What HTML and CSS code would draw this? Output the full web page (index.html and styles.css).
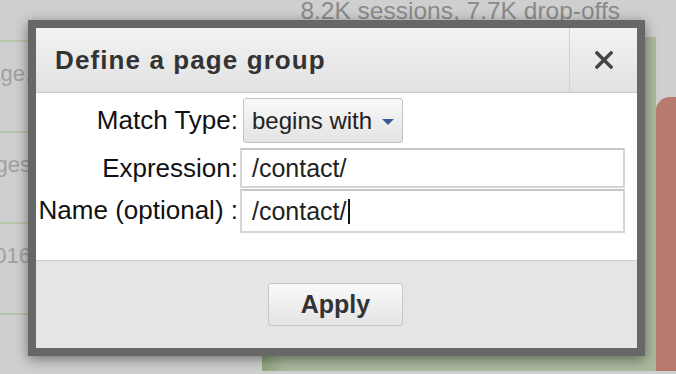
FILE: index.html
```html
<!DOCTYPE html>
<html lang="en">
<head>
  <meta charset="UTF-8">
  <title>Define a page group</title>
  <link rel="stylesheet" href="styles.css">
</head>
<body>
  <div class="page">
    <div class="summary">8.2K sessions, 7.7K drop-offs</div>
    <div class="stage">
      <div class="steps">
        <div class="step"><span>Page.</span></div>
        <div class="step"><span>Pages</span></div>
        <div class="step"><span>2016</span></div>
        <div class="step"></div>
      </div>
      <div class="funnel"></div>
      <div class="exits"></div>
    </div>
  </div>

  <div class="dialog">
    <div class="dialog-head">
      <div class="dialog-title">Define a page group</div>
      <div class="dialog-close">
        <svg width="18" height="18" viewBox="0 0 18 18">
          <path d="M2 2 L16 16 M16 2 L2 16" stroke="#444" stroke-width="3.4" stroke-linecap="square"/>
        </svg>
      </div>
    </div>
    <div class="dialog-body">
      <label class="label">Match Type:</label>
      <div>
        <div class="select">begins with <span class="arrow"></span></div>
      </div>
      <label class="label">Expression:</label>
      <div class="field">/contact/</div>
      <label class="label">Name (optional) :</label>
      <div class="field">/contact/<span class="caret"></span></div>
    </div>
    <div class="dialog-foot">
      <button class="apply">Apply</button>
    </div>
  </div>
</body>
</html>
```

FILE: styles.css
```css
body {
  margin: 0;
  font-family: "Liberation Sans", Arial, sans-serif;
  color: #222;
}

.page {
  position: relative;
  height: 374px;
  overflow: hidden;
  background: #cfcfcf;
}

.summary {
  height: 40px;
  margin-top: -3px;
  padding-right: 56px;
  text-align: right;
  font-size: 24.5px;
  color: #8a8a8a;
}

.stage {
  display: flex;
  height: 334px;
}

.steps {
  width: 262px;
  padding-top: 3px;
}

.step {
  display: flex;
  justify-content: flex-end;
  height: 89px;
  border-top: 2px solid #b7c6a6;
  padding-top: 19px;
  padding-right: 231px;
  font-size: 22px;
  color: #a0a0a0;
  white-space: nowrap;
  overflow: hidden;
  box-sizing: border-box;
  margin-bottom: 2px;
}

.funnel {
  flex: 1;
  background: linear-gradient(to right, #8ea67e, #abb99e 22px);
}

.exits {
  width: 20px;
  margin-top: 60px;
  background: #b87a6e;
  border-top-left-radius: 14px;
}

.dialog {
  position: absolute;
  left: 28px;
  top: 20px;
  width: 617px;
  height: 336px;
  box-sizing: border-box;
  border: 8px solid #676767;
  background: #fff;
  box-shadow: 0 3px 12px rgba(0, 0, 0, 0.45);
  display: flex;
  flex-direction: column;
}

.dialog-head {
  display: flex;
  height: 65px;
  box-sizing: border-box;
  border-bottom: 1px solid #c9c9c9;
  background: linear-gradient(#f3f3f3, #e1e1e1);
}

.dialog-title {
  flex: 1;
  display: flex;
  align-items: center;
  padding-left: 19px;
  font-weight: bold;
  font-size: 26px;
  letter-spacing: 1.1px;
  color: #333;
}

.dialog-close {
  width: 67px;
  display: flex;
  align-items: center;
  justify-content: center;
  border-left: 1px solid #d2d2d2;
}

.dialog-body {
  display: grid;
  grid-template-columns: 198px 1fr;
  grid-template-rows: 45px 45px 44px;
  column-gap: 2px;
  height: 167px;
  box-sizing: border-box;
  padding: 5px 12px 0 4px;
  font-size: 25px;
}

.label {
  display: flex;
  align-items: center;
  justify-content: flex-end;
  white-space: nowrap;
  font-size: 26px;
  color: #111;
}

.label:nth-of-type(2) {
  margin-top: 5px;
}

.select {
  display: inline-flex;
  align-items: center;
  gap: 10px;
  margin-left: 3px;
  height: 45px;
  width: 160px;
  box-sizing: border-box;
  padding-left: 8px;
  font-size: 24px;
  border: 1px solid #c2c2c2;
  border-radius: 3px;
  background: linear-gradient(#f9f9f9, #e3e3e3);
  color: #222;
}

.arrow {
  width: 0;
  height: 0;
  border-left: 6px solid transparent;
  border-right: 6px solid transparent;
  border-top: 6px solid #3d5a98;
  margin-top: 2px;
}

.field {
  display: flex;
  align-items: center;
  box-sizing: border-box;
  padding-left: 10px;
  border: 2px solid #d6d6d6;
  border-top-color: #c6c6c6;
  background: #fff;
  color: #222;
}

.field:nth-of-type(2) {
  margin-top: 5px;
}

.field:last-child {
  margin-top: 1px;
  height: 44px;
}

.caret {
  display: inline-block;
  width: 2px;
  height: 25px;
  margin-left: 1px;
  background: #111;
}

.dialog-foot {
  flex: 1;
  display: flex;
  align-items: center;
  justify-content: center;
  border-top: 1px solid #cbcbcb;
  background: #e5e5e5;
}

.apply {
  width: 135px;
  height: 43px;
  font-family: inherit;
  font-weight: bold;
  font-size: 25px;
  color: #333;
  border: 1px solid #c6c6c6;
  border-radius: 3px;
  background: linear-gradient(#fafafa, #e3e3e3);
  margin-left: -2px;
}
```
